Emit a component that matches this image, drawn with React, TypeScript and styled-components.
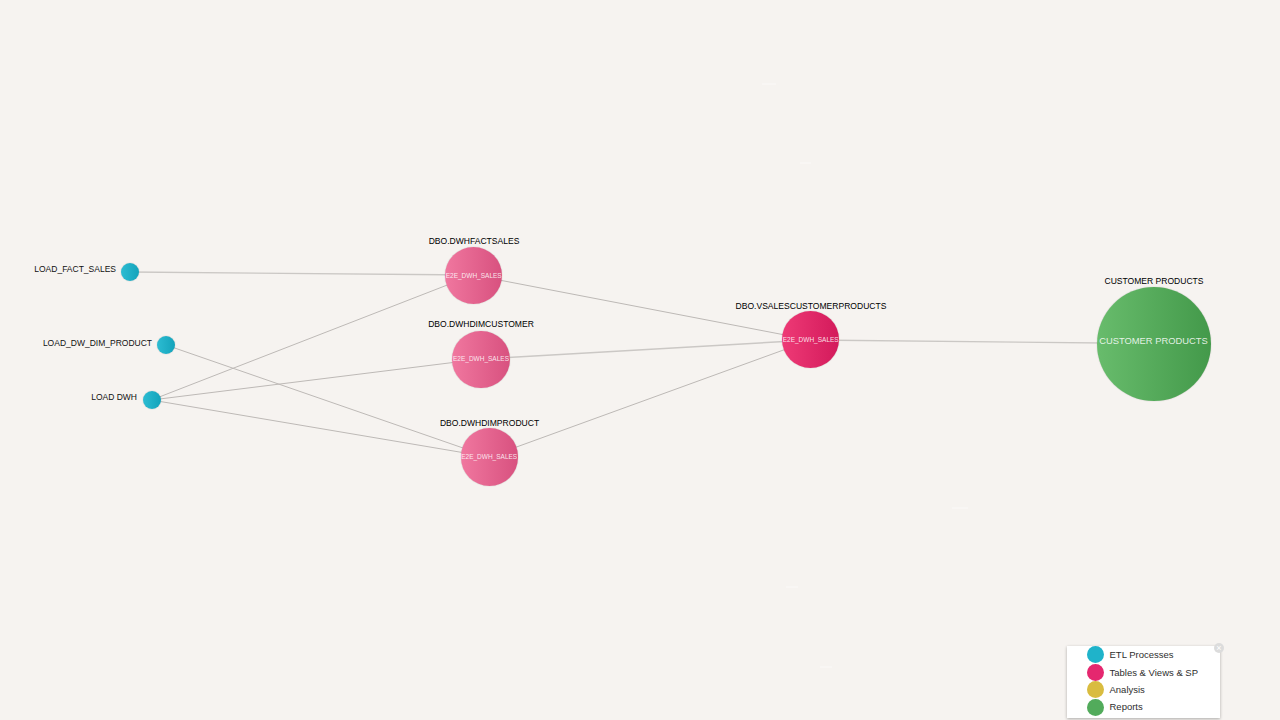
import React from 'react';
import styled, { createGlobalStyle } from 'styled-components';

const Global = createGlobalStyle`
  html, body { margin: 0; padding: 0; background: #f6f3f0; }
  body { font-family: "Liberation Sans", Arial, sans-serif; }
`;

const Canvas = styled.div`
  position: relative;
  width: 1280px;
  height: 720px;
  overflow: hidden;
  background: #f6f3f0;
`;

const Edges = styled.svg`
  position: absolute;
  left: 0;
  top: 0;
`;

const palette = {
  teal: ['#2cbcd2', '#14a3bb'],
  pink: ['#f0779f', '#d8517f'],
  crimson: ['#ee3a76', '#d31a5b'],
  green: ['#68bc6c', '#43994a'],
} as const;

type Tone = keyof typeof palette;

const Circle = styled.div<{ $x: number; $y: number; $r: number; $tone: Tone }>`
  position: absolute;
  left: ${p => p.$x - p.$r}px;
  top: ${p => p.$y - p.$r}px;
  width: ${p => p.$r * 2}px;
  height: ${p => p.$r * 2}px;
  border-radius: 50%;
  display: flex;
  align-items: center;
  justify-content: center;
  background: linear-gradient(90deg, ${p => palette[p.$tone][0]}, ${p => palette[p.$tone][1]});
  box-shadow: 0 0 1px rgba(60, 60, 60, 0.45);
`;

const Inner = styled.span<{ $size: number; $dy: number }>`
  color: rgba(255, 255, 255, 0.85);
  font-size: ${p => p.$size}px;
  white-space: nowrap;
  transform: translateY(${p => p.$dy}px);
`;

const TopLabel = styled.span<{ $x: number; $y: number }>`
  position: absolute;
  left: ${p => p.$x}px;
  top: ${p => p.$y}px;
  transform: translateX(-50%);
  font-size: 8.55px;
  line-height: 11px;
  color: #000;
  white-space: nowrap;
`;

const SideLabel = styled.span<{ $right: number; $y: number }>`
  position: absolute;
  right: ${p => 1280 - p.$right}px;
  top: ${p => p.$y}px;
  font-size: 8.5px;
  line-height: 11px;
  color: #111;
  white-space: nowrap;
`;

const Legend = styled.div`
  position: absolute;
  left: 1067px;
  top: 646px;
  width: 153px;
  height: 72px;
  box-sizing: border-box;
  padding-left: 19.5px;
  display: grid;
  grid-auto-rows: 17.6px;
  background: #fff;
  box-shadow: 0 1px 3px rgba(0, 0, 0, 0.3);
`;

const LegendRow = styled.div`
  display: flex;
  align-items: center;
  gap: 6px;
`;

const Dot = styled.span<{ $color: string }>`
  width: 17px;
  height: 17px;
  border-radius: 50%;
  flex: none;
  background: ${p => p.$color};
`;

const LegendText = styled.span<{ $dy: number }>`
  font-size: 9.5px;
  color: #2e2e2e;
  white-space: nowrap;
  transform: translateY(${p => p.$dy}px);
`;

const CloseBtn = styled.span`
  position: absolute;
  right: -4px;
  top: -3px;
  width: 10px;
  height: 10px;
  border-radius: 50%;
  background: #dcdcdc;
  display: flex;
  align-items: center;
  justify-content: center;
  color: #fff;
  font-size: 9px;
  line-height: 10px;
`;

const nodes: { x: number; y: number; r: number; tone: Tone; inner?: string; size?: number; dy?: number }[] = [
  { x: 130, y: 272, r: 9, tone: 'teal' },
  { x: 166, y: 345.2, r: 9, tone: 'teal' },
  { x: 151.5, y: 399.7, r: 9, tone: 'teal' },
  { x: 473.7, y: 275.7, r: 28.7, tone: 'pink', inner: 'E2E_DWH_SALES', size: 6.5, dy: -0.5 },
  { x: 481, y: 359.2, r: 28.7, tone: 'pink', inner: 'E2E_DWH_SALES', size: 6.5, dy: -1 },
  { x: 489.2, y: 457, r: 28.7, tone: 'pink', inner: 'E2E_DWH_SALES', size: 6.5, dy: -0.5 },
  { x: 810.7, y: 339.9, r: 28.5, tone: 'crimson', inner: 'E2E_DWH_SALES', size: 6.5, dy: 0 },
  { x: 1153.5, y: 343.5, r: 57, tone: 'green', inner: 'CUSTOMER PRODUCTS', size: 9.4, dy: -3.5 },
];

const edges: { d: number[]; soft?: boolean }[] = [
  { d: [130, 272, 473, 275], soft: true },
  { d: [166, 345, 489, 457] },
  { d: [151.5, 400, 473, 275] },
  { d: [151.5, 400, 481, 359] },
  { d: [151.5, 400, 489, 457] },
  { d: [473, 275, 811, 340] },
  { d: [481, 359, 811, 340], soft: true },
  { d: [489, 457, 811, 340] },
  { d: [811, 340, 1153, 343.5], soft: true },
];

const specks = [
  [762, 84, 776],
  [800, 163, 811],
  [952, 508, 968],
  [786, 587, 798],
  [820, 667, 832],
];

const topLabels = [
  { x: 474, y: 236, t: 'DBO.DWHFACTSALES' },
  { x: 481, y: 319, t: 'DBO.DWHDIMCUSTOMER' },
  { x: 489.5, y: 418, t: 'DBO.DWHDIMPRODUCT' },
  { x: 811, y: 301, t: 'DBO.VSALESCUSTOMERPRODUCTS' },
  { x: 1154, y: 276, t: 'CUSTOMER PRODUCTS' },
];

const sideLabels = [
  { right: 116, y: 264, t: 'LOAD_FACT_SALES' },
  { right: 152, y: 337.5, t: 'LOAD_DW_DIM_PRODUCT' },
  { right: 137, y: 392, t: 'LOAD DWH' },
];

const legend = [
  { c: '#1fb3ca', t: 'ETL Processes', dy: 0 },
  { c: '#e5276f', t: 'Tables & Views & SP', dy: 0 },
  { c: '#d9bc3f', t: 'Analysis', dy: -0.5 },
  { c: '#52ab5b', t: 'Reports', dy: -1 },
];

export default function App() {
  return (
    <Canvas>
      <Global />
      <Edges width={1280} height={720}>
        {specks.map(([a, y, b], i) => (
          <line key={i} x1={a} y1={y} x2={b} y2={y} stroke="#fff" strokeOpacity={0.6} strokeWidth={1} />
        ))}
        {edges.map(({ d: [a, b, c, d], soft }, i) => (
          <line
            key={i}
            x1={a}
            y1={b}
            x2={c}
            y2={d}
            stroke={soft ? '#cbc8c5' : '#bdb9b6'}
            strokeWidth={soft ? 1.4 : 1}
          />
        ))}
      </Edges>
      {nodes.map((n, i) => (
        <Circle key={i} $x={n.x} $y={n.y} $r={n.r} $tone={n.tone}>
          {n.inner && <Inner $size={n.size ?? 7} $dy={n.dy ?? 0}>{n.inner}</Inner>}
        </Circle>
      ))}
      {topLabels.map(l => <TopLabel key={l.t} $x={l.x} $y={l.y}>{l.t}</TopLabel>)}
      {sideLabels.map(l => <SideLabel key={l.t} $right={l.right} $y={l.y}>{l.t}</SideLabel>)}
      <Legend>
        <CloseBtn>×</CloseBtn>
        {legend.map(l => (
          <LegendRow key={l.t}>
            <Dot $color={l.c} />
            <LegendText $dy={l.dy}>{l.t}</LegendText>
          </LegendRow>
        ))}
      </Legend>
    </Canvas>
  );
}
